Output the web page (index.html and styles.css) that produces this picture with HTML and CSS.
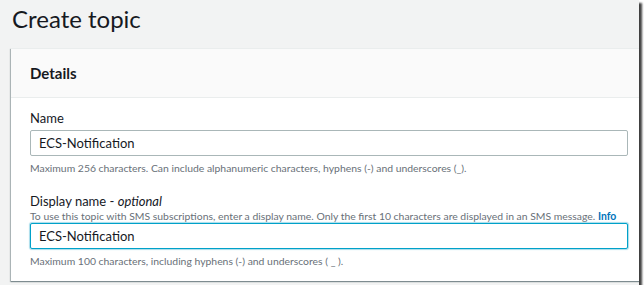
FILE: index.html
```html
<!DOCTYPE html>
<html lang="en">

<head>
    <meta charset="UTF-8">
    <meta name="viewport" content="width=device-width, initial-scale=1.0">
    <title>Create topic</title>
    <link rel="stylesheet" href="styles.css">
</head>

<body>
    <div class="frame">
        <h1 class="page-title">Create topic</h1>

        <!-- Details card -->
        <div class="card">
            <div class="card-header">
                <h2>Details</h2>
            </div>
            <div class="card-body">
                <div class="field">
                    <label for="name">Name</label>
                    <input type="text" id="name" value="ECS-Notification">
                    <p class="hint">Maximum 256 characters. Can include alphanumeric characters, hyphens (-) and underscores (_).</p>
                </div>
                <div class="field">
                    <label for="displayName">Display name - <em>optional</em></label>
                    <p class="desc">To use this topic with SMS subscriptions, enter a display name. Only the first 10 characters are displayed in an SMS message. <a href="#">Info</a></p>
                    <input type="text" id="displayName" class="focused" value="ECS-Notification">
                    <p class="hint">Maximum 100 characters, including hyphens (-) and underscores ( _ ).</p>
                </div>
            </div>
        </div>
    </div>
</body>

</html>
```

FILE: styles.css
```css
body {
    margin: 0;
    background: #ffffff;
    font-family: Lato, "Open Sans", sans-serif;
    color: #16191f;
}

.frame {
    width: 639px;
    height: 285px;
    background: #f2f3f3;
    overflow: hidden;
    box-shadow: 3px 3px 2px rgba(0, 0, 0, 0.75);
}

.page-title {
    margin: 0;
    padding: 1px 0 0 12px;
    height: 48px;
    box-sizing: border-box;
    font-size: 24px;
    font-weight: 400;
    line-height: 36px;
}

.card {
    margin: 0 -8px 0 11px;
    background: #ffffff;
    box-shadow: 0 1px 1px 0 rgba(0, 28, 36, 0.3), -1px 1px 1px 0 rgba(0, 28, 36, 0.25);
    border-top: 1px solid #eaeded;
}

.card-header {
    background: #fafafa;
    border-bottom: 1px solid #eaeded;
    height: 48px;
    display: flex;
    align-items: center;
    padding: 0 19px;
}

.card-header h2 {
    margin: 0;
    font-size: 15px;
    font-weight: 700;
}

.card-body {
    padding: 11px 19px 13px;
    display: flex;
    flex-direction: column;
    gap: 17px;
}

.field {
    display: flex;
    flex-direction: column;
}

label {
    font-size: 13px;
    line-height: 18px;
    margin-bottom: 3px;
}

label em {
    font-style: italic;
}

input {
    font-family: inherit;
    font-size: 13px;
    color: #16191f;
    height: 26px;
    box-sizing: border-box;
    padding: 0 8px;
    border: 1px solid #aab7b8;
    border-radius: 2px;
    outline: none;
}

input.focused {
    border-color: #00a1c9;
    box-shadow: 0 0 1px 1px #a8dcea;
}

.hint,
.desc {
    margin: 0;
    font-size: 10.4px;
    line-height: 14px;
    color: #687078;
}

.hint {
    margin-top: 5px;
}

.desc {
    margin: -4px 0 0;
}

.desc a {
    color: #0073bb;
    font-weight: 700;
    text-decoration: none;
}
```
